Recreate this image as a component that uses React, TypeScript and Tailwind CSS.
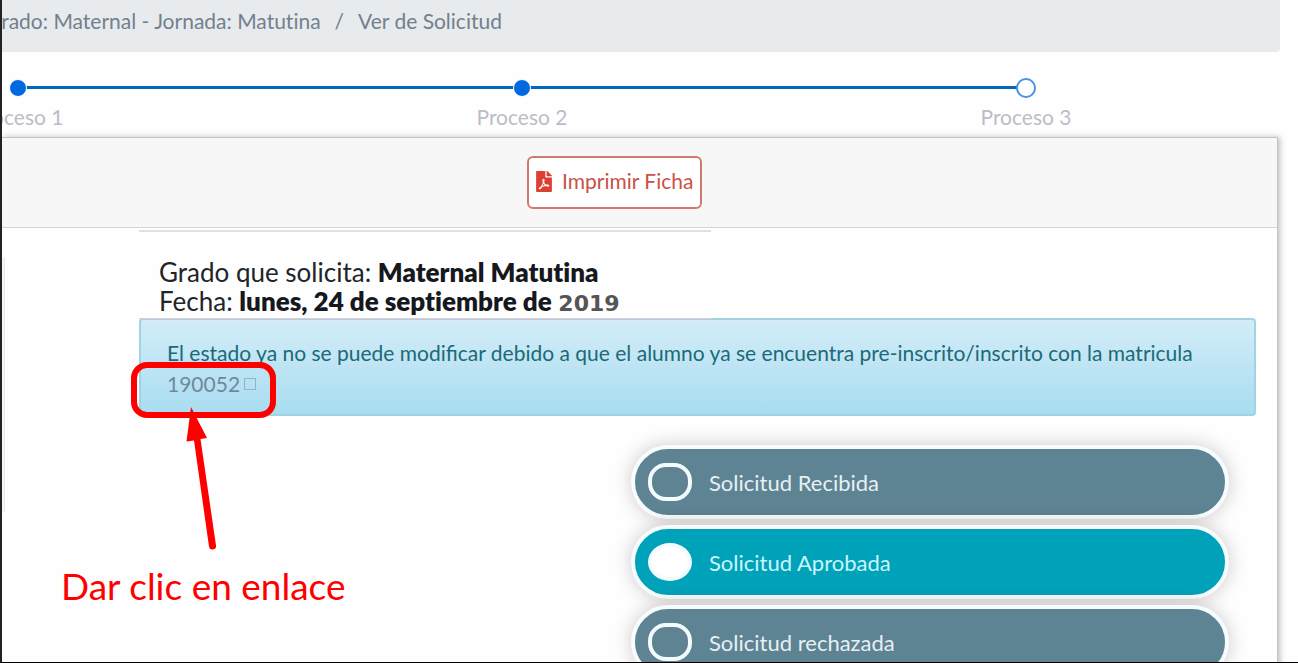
import { useState } from 'react';
import { FaFilePdf } from 'react-icons/fa';

const steps = [
  { label: 'Proceso 1', done: true },
  { label: 'Proceso 2', done: true },
  { label: 'Proceso 3', done: false },
];

const estados = ['Solicitud Recibida', 'Solicitud Aprobada', 'Solicitud rechazada'];

const Breadcrumb = () => (
  <nav className="h-[52px] overflow-hidden rounded-br bg-[#e7ebee] pt-1 text-[21px] leading-[34px] text-[#74808c] [font-variant-ligatures:none]">
    <ol className="-ml-4 flex gap-[14px] whitespace-nowrap">
      <li>
        <a href="#grado">Grado: Maternal - Jornada: Matutina</a>
      </li>
      <li>/</li>
      <li>Ver de Solicitud</li>
    </ol>
  </nav>
);

const Stepper = () => (
  <ol className="mr-[2px] -ml-[236px] flex pt-[26px] pb-[5px]">
    {steps.map((step, i) => (
      <li key={step.label} className="relative flex flex-1 flex-col items-center">
        {/* line towards the next step */}
        {i < steps.length - 1 && (
          <span className="absolute top-2 left-1/2 h-[3px] w-full bg-[#0069bd]" />
        )}
        <span
          className={
            step.done
              ? 'relative my-px size-[18px] rounded-full border border-white bg-[#0069e0]'
              : 'relative size-5 rounded-full border-2 border-[#4c93e0] bg-white'
          }
        />
        <span className="mt-1 text-[21px] leading-[30px] text-[#bcbcc9]">{step.label}</span>
      </li>
    ))}
  </ol>
);

/* Highlight, arrow and note over the enrolment link */
const Nota = () => (
  <>
    <div className="pointer-events-none absolute top-[134px] left-[129px] h-[56px] w-[145px] rounded-[16px] border-[6px] border-[#ff0000]" />
    <svg
      className="pointer-events-none absolute top-[178px] left-[178px]"
      width="40"
      height="144"
      viewBox="0 0 40 144"
    >
      <path d="M11 1 L27 32 L20.5 33 L36 139.500 A3.500 3.500 0 0 1 29 140.500 L14 34.500 L6.500 35.500 Z" fill="#ff0000" />
    </svg>
    <p className="absolute top-[334px] left-[59px] text-[37px] leading-[48px] whitespace-nowrap text-[#ff0000]">
      Dar clic en enlace
    </p>
  </>
);

const App = () => {
  const [estado, setEstado] = useState('Solicitud Aprobada');

  return (
    <div className="h-screen overflow-hidden border-b border-l-2 border-b-black border-l-[#222222] bg-[#fefefe] font-['Lato',sans-serif]">
      <div className="mr-[18px]">
        <Breadcrumb />
        <Stepper />

        <section className="mr-[2px] min-h-[560px] border-t border-r border-[#c4c4c4] bg-[#fefefe] shadow-[2px_0_6px_rgba(0,0,0,0.25)]">
          <header className="flex h-[90px] items-center border-b border-[#d6d6d6] bg-[#f7f7f7] pl-[525px]">
            <button className="flex h-[53px] items-center gap-[10px] rounded-[6px] border-2 border-[#d0796f] bg-white px-[7px] pb-[3px] text-[21px] whitespace-nowrap text-[#cc5147]">
              <FaFilePdf className="h-[21px] w-4 text-[#dc4030]" />
              Imprimir Ficha
            </button>
          </header>

          <div className="relative flex">
            <aside className="mt-[29px] h-[255px] w-[3px] shrink-0 rounded-r-sm border-r border-[#e6e6e6] bg-[#f7f7f7]" />

            <main className="ml-[134px] min-w-0 flex-1 pr-[21px]">
              <div className="relative mt-[2px] w-[572px] border-t-2 border-b border-t-[#e0e0e0] border-b-[#ecc6d4] pt-[26px] pb-[2px] text-[26px] leading-[29px] whitespace-nowrap text-[#212529] [font-variant-ligatures:none]">
                <p className="pl-5">
                  Grado que solicita: <b className="font-extrabold text-[#15191d]">Maternal Matutina</b>
                </p>
                <p className="pl-5">
                  Fecha: <b className="font-extrabold text-[#15191d]">lunes, 24 de septiembre de</b>{' '}
                  <b className="font-['DejaVu_Sans',sans-serif] text-[22px] leading-none text-[#555555]">2019</b>
                </p>
              </div>

              <div className="-mt-px rounded-[4px] border-2 border-[#9fd4e0] bg-linear-to-b from-[#d3ecf8] to-[#a8ddf0] px-[26px] pt-[17px] pb-[15px] text-[21px] leading-[31px] text-[#1b6a78]">
                <p>
                  El estado ya no se puede modificar debido a que el alumno ya se encuentra
                  pre-inscrito/inscrito con la matricula{' '}
                  <a href="#matricula" className="inline-flex items-center gap-1 text-[#71889a]">
                    190052
                    <span className="size-3 border border-[#8fb5c6]" />
                  </a>
                </p>
              </div>

              <fieldset className="mt-[29px] mr-[27px] ml-auto flex w-[598px] max-w-full flex-col gap-[6px]">
                {estados.map((nombre) => (
                  <label
                    key={nombre}
                    className={`flex h-[74px] cursor-pointer items-center gap-[17px] rounded-full border-4 border-[#f7fcff] pl-[13px] text-[22px] shadow-[0_0_18px_rgba(60,40,40,0.25)] ${
                      estado === nombre ? 'bg-[#00a2ba] text-[#c9f6fa]' : 'bg-[#5e8393] text-[#e6f0f4]'
                    }`}
                  >
                    <input
                      type="radio"
                      name="estado"
                      checked={estado === nombre}
                      onChange={() => setEstado(nombre)}
                      className="h-[38px] w-11 appearance-none rounded-[18px] border-4 border-[#f4fbff] checked:rounded-[50%] checked:bg-white"
                    />
                    {nombre}
                  </label>
                ))}
              </fieldset>
            </main>

            <Nota />
          </div>
        </section>
      </div>
    </div>
  );
};

export default App;
